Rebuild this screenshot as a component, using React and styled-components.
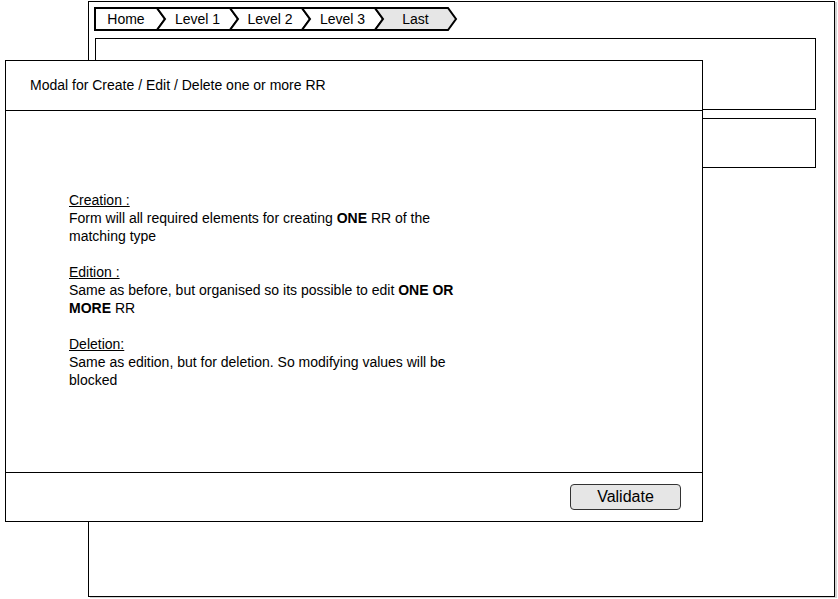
import styled, { createGlobalStyle } from "styled-components";

const GlobalStyle = createGlobalStyle`
  body {
    margin: 0;
    background: #ffffff;
    font-family: "Liberation Sans", Arial, sans-serif;
    color: #000;
  }
`;

const Page = styled.div`
  position: relative;
  width: 838px;
  height: 599px;
  overflow: hidden;
`;

const Window = styled.div`
  margin: 1px 0 0 88px;
  width: 747px;
  height: 596px;
  border: 1px solid #000;
  box-shadow: 2px 1px 0 #d4d4d4;
  padding: 6px 0 0 6px;
  box-sizing: border-box;
  display: flex;
  flex-direction: column;
  gap: 8px;
`;

const Breadcrumb = styled.nav`
  display: flex;
  height: 22px;
`;

const Crumb = styled.div`
  position: relative;
  width: ${(p) => p.$width}px;
  height: 22px;
  margin-left: ${(p) => (p.$first ? 0 : -8)}px;
  padding: 0 8px 1px ${(p) => (p.$first ? 0 : 8)}px;
  box-sizing: border-box;
  display: flex;
  align-items: center;
  justify-content: center;
  font-size: 14px;

  svg {
    position: absolute;
    left: 0;
    top: 0;
    overflow: visible;
  }

  span {
    position: relative;
  }
`;

const Panel = styled.div`
  width: 721px;
  height: ${(p) => p.$height}px;
  border: 1px solid #000;
  box-sizing: border-box;
`;

const Modal = styled.div`
  position: absolute;
  left: 5px;
  top: 60px;
  width: 698px;
  height: 462px;
  border: 1px solid #000;
  background: #fff;
  box-sizing: border-box;
  display: flex;
  flex-direction: column;
`;

const ModalHeader = styled.div`
  height: 50px;
  border-bottom: 1px solid #000;
  padding: 0 0 1px 24px;
  box-sizing: border-box;
  display: flex;
  align-items: center;
  font-size: 14px;
`;

const ModalBody = styled.div`
  flex: 1;
  padding: 80px 0 0 63px;
  border-bottom: 1px solid #000;
`;

const Section = styled.div`
  width: 392px;
  font-size: 14px;
  line-height: 18px;
  margin-bottom: 18px;
`;

const SectionTitle = styled.div`
  text-decoration: underline;
`;

const ModalFooter = styled.div`
  height: 48px;
  display: flex;
  align-items: center;
  justify-content: flex-end;
  padding-right: 21px;
`;

const Button = styled.button`
  width: 111px;
  height: 26px;
  border: 1px solid #333;
  border-radius: 4px;
  background: #e6e6e6;
  font-family: "Liberation Sans", Arial, sans-serif;
  font-size: 16px;
  color: #000;
  padding: 0;
`;

const crumbs = [
  { label: "Home", width: 70 },
  { label: "Level 1", width: 81 },
  { label: "Level 2", width: 80 },
  { label: "Level 3", width: 81 },
  { label: "Last", width: 81, active: true },
];

function CrumbShape({ width, first, active }) {
  const w = width;
  const points = first
    ? `0,0 ${w - 8},0 ${w},11 ${w - 8},22 0,22`
    : `0,0 ${w - 8},0 ${w},11 ${w - 8},22 0,22 8,11`;
  return (
    <svg width={w} height="22" viewBox={`0 0 ${w} 22`}>
      <polygon
        points={points}
        fill={active ? "#e6e6e6" : "#fff"}
        stroke="#000"
        strokeWidth="2"
      />
    </svg>
  );
}

export default function App() {
  return (
    <Page>
      <GlobalStyle />
      <Window>
        <Breadcrumb>
          {crumbs.map((c, i) => (
            <Crumb key={c.label} $width={c.width} $first={i === 0}>
              <CrumbShape width={c.width} first={i === 0} active={c.active} />
              <span>{c.label}</span>
            </Crumb>
          ))}
        </Breadcrumb>
        <Panel $height={72} />
        <Panel $height={50} />
      </Window>

      <Modal>
        <ModalHeader>Modal for Create / Edit / Delete one or more RR</ModalHeader>
        <ModalBody>
          <Section>
            <SectionTitle>Creation :</SectionTitle>
            Form will all required elements for creating <b>ONE</b> RR of the
            matching type
          </Section>
          <Section>
            <SectionTitle>Edition :</SectionTitle>
            Same as before, but organised so its possible to edit{" "}
            <b>ONE OR MORE</b> RR
          </Section>
          <Section>
            <SectionTitle>Deletion:</SectionTitle>
            Same as edition, but for deletion. So modifying values will be
            blocked
          </Section>
        </ModalBody>
        <ModalFooter>
          <Button>Validate</Button>
        </ModalFooter>
      </Modal>
    </Page>
  );
}
